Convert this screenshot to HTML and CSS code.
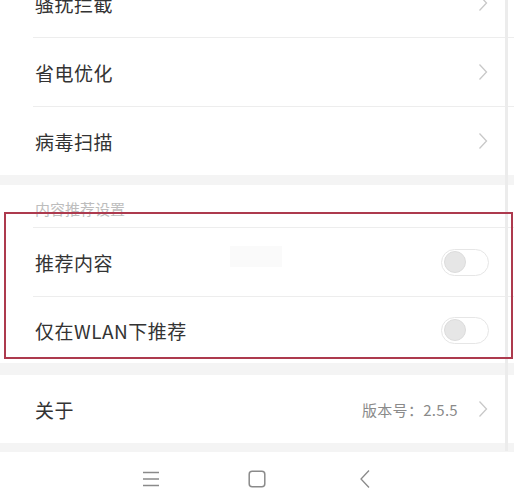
FILE: index.html
```html
<!DOCTYPE html>
<html lang="zh-CN">
<head>
<meta charset="utf-8">
<link rel="stylesheet" href="styles.css">
</head>
<body>
<div class="page">
  <div class="group first">
    <div class="row"><span class="label">骚扰拦截</span><svg class="chev" width="10" height="18" viewBox="0 0 10 18"><path d="M1.5 1.5 L8.5 9 L1.5 16.5" fill="none" stroke="#c8c8c8" stroke-width="1.3"/></svg></div>
    <div class="row"><span class="label">省电优化</span><svg class="chev" width="10" height="18" viewBox="0 0 10 18"><path d="M1.5 1.5 L8.5 9 L1.5 16.5" fill="none" stroke="#c8c8c8" stroke-width="1.3"/></svg></div>
    <div class="row last"><span class="label">病毒扫描</span><svg class="chev" width="10" height="18" viewBox="0 0 10 18"><path d="M1.5 1.5 L8.5 9 L1.5 16.5" fill="none" stroke="#c8c8c8" stroke-width="1.3"/></svg></div>
  </div>
  <div class="band b1"></div>
  <div class="group">
    <div class="header"><span>内容推荐设置</span></div>
    <div class="row"><span class="label">推荐内容</span><span class="toggle"><span class="thumb"></span></span></div>
    <div class="row last short"><span class="label">仅在WLAN下推荐</span><span class="toggle"><span class="thumb"></span></span></div>
  </div>
  <div class="band b2"></div>
  <div class="group">
    <div class="row last about"><span class="label">关于</span><span class="right"><span class="ver">版本号：2.5.5</span><svg class="chev" width="10" height="18" viewBox="0 0 10 18"><path d="M1.5 1.5 L8.5 9 L1.5 16.5" fill="none" stroke="#c8c8c8" stroke-width="1.3"/></svg></span></div>
  </div>
  <div class="band b3"></div>
  <div class="nav">
    <svg class="nav-menu" width="18" height="18" viewBox="0 0 18 18"><path d="M1 2.5 H17 M1 9 H17 M1 15.5 H17" stroke="#8a8a8a" stroke-width="1.3" fill="none"/></svg>
    <svg class="nav-home" width="18" height="18" viewBox="0 0 18 18"><rect x="1.2" y="1.2" width="15.6" height="15.6" rx="3" stroke="#8a8a8a" stroke-width="1.5" fill="none"/></svg>
    <svg class="nav-back" width="12" height="20" viewBox="0 0 12 20"><path d="M10 1.5 L2 10 L10 18.5" stroke="#8a8a8a" stroke-width="1.3" fill="none"/></svg>
  </div>
  <div class="scrollbar"></div>
  <div class="smudge"></div>
  <div class="highlight"></div>
</div>
</body>
</html>
```
FILE: styles.css
```css
html, body {
  margin: 0;
  padding: 0;
  background: #ffffff;
}
body {
  font-family: "Noto Sans CJK SC", "Noto Sans", sans-serif;
  color: #333333;
}
.page {
  position: relative;
  width: 514px;
  height: 500px;
  overflow: hidden;
}
.group {
  background: #ffffff;
}
.first {
  margin-top: -31px;
}
.row {
  height: 69px;
  margin-left: 33px;
  padding: 0 26px 0 2px;
  display: flex;
  align-items: center;
  justify-content: space-between;
  border-bottom: 1px solid #ededed;
  box-sizing: border-box;
}
.row.last {
  border-bottom: none;
  height: 68px;
}
.row.short {
  height: 66px;
}
.label {
  font-size: 19px;
  line-height: 1;
  letter-spacing: 0.5px;
  color: #333;
}
.chev {
  display: block;
}
.band {
  background: #f4f4f4;
}
.b1 { height: 10px; }
.b2 { height: 12px; }
.b3 { height: 9px; }
.header {
  height: 43px;
  margin-left: 33px;
  padding-left: 2px;
  border-bottom: 1px solid #ededed;
  box-sizing: border-box;
  display: flex;
  align-items: flex-end;
  padding-bottom: 11px;
}
.header span {
  font-size: 15px;
  line-height: 1;
  color: #bdbdbd;
}
.toggle {
  width: 48px;
  height: 27px;
  border: 1px solid #e6e6e6;
  border-radius: 14px;
  box-sizing: border-box;
  display: flex;
  align-items: center;
  padding-left: 2px;
  margin-right: -1px;
}
.thumb {
  width: 22px;
  height: 22px;
  border-radius: 50%;
  background: #e6e6e6;
  border: 1px solid #dcdcdc;
  box-sizing: border-box;
}
.right {
  display: flex;
  align-items: center;
  gap: 20px;
}
.ver {
  font-size: 15px;
  color: #8a8a8a;
  letter-spacing: 0.3px;
}
.nav {
  height: 48px;
  display: flex;
  align-items: center;
  padding-left: 142px;
  padding-top: 5px;
  box-sizing: border-box;
}
.nav-home { margin-left: 88px; }
.nav-back { margin-left: 93px; }
.scrollbar {
  position: absolute;
  left: 505px;
  top: 0;
  width: 3px;
  height: 451px;
  background: #ececec;
}
.smudge {
  position: absolute;
  left: 230px;
  top: 246px;
  width: 52px;
  height: 21px;
  background: #fafafa;
}
.highlight {
  position: absolute;
  left: 4px;
  top: 212px;
  width: 509px;
  height: 147px;
  border: 2px solid #ad3a4e;
  box-sizing: border-box;
}
```
